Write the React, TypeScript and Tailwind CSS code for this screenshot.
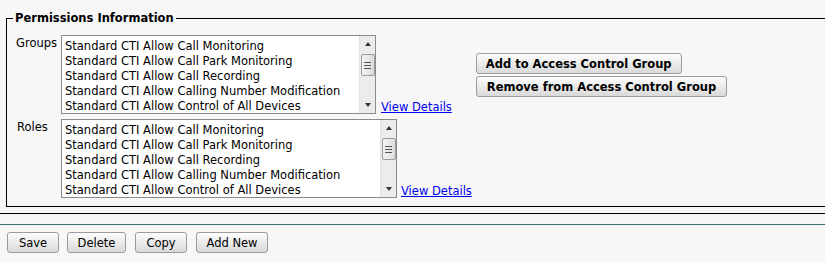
import React from "react";

const items = [
  "Standard CTI Allow Call Monitoring",
  "Standard CTI Allow Call Park Monitoring",
  "Standard CTI Allow Call Recording",
  "Standard CTI Allow Calling Number Modification",
  "Standard CTI Allow Control of All Devices",
];

const font = { fontFamily: "'DejaVu Sans', Verdana, sans-serif" };

function ScrollBar() {
  return (
    <div className="flex h-full w-[16px] flex-col items-center bg-[#ececec] border-l border-[#e2e2e2]">
      <div className="flex h-[16px] w-full items-center justify-center">
        <div className="h-0 w-0 border-x-[3.5px] border-b-[4px] border-x-transparent border-b-[#333]" />
      </div>
      <div className="mt-[2px] flex h-[22px] w-[14px] flex-col items-center justify-center gap-[2px] rounded-[2px] border border-[#9a9a9a] bg-gradient-to-r from-[#f4f4f4] to-[#dcdcdc]">
        <div className="h-px w-[7px] bg-[#555]" />
        <div className="h-px w-[7px] bg-[#555]" />
        <div className="h-px w-[7px] bg-[#555]" />
      </div>
      <div className="flex-1" />
      <div className="flex h-[16px] w-full items-center justify-center">
        <div className="h-0 w-0 border-x-[3.5px] border-t-[4px] border-x-transparent border-t-[#333]" />
      </div>
    </div>
  );
}

function ListBox({ width }: { width: string }) {
  return (
    <div className={`flex h-[79px] ${width} border border-[#8b8b8b] bg-white`}>
      <div className="flex-1 overflow-hidden whitespace-nowrap pl-[3px] pt-[3px] text-[11.5px] leading-[15px] text-black">
        {items.map((t) => (
          <div key={t}>{t}</div>
        ))}
      </div>
      <ScrollBar />
    </div>
  );
}

function Btn({ children, bold, cls }: { children: React.ReactNode; bold?: boolean; cls: string }) {
  return (
    <button
      className={`h-[21px] rounded-[3px] border border-[#9c9c9c] bg-gradient-to-b from-[#fdfdfd] to-[#d9d9d9] ${cls} text-[11.5px] leading-[18px] text-black whitespace-nowrap ${bold ? "font-bold" : ""}`}
      style={font}
    >
      {children}
    </button>
  );
}

export default function App() {
  return (
    <div className="h-[262px] w-[825px] overflow-hidden bg-[#f7f7f7]" style={font}>
      <fieldset className="ml-[6px] mt-[11px] w-[830px] border border-black pb-[8px] pl-[9px]">
        <legend className="-ml-[3px] px-[2px] text-[11.5px] font-bold leading-[14px] text-black">
          Permissions Information
        </legend>
        <div className="mt-[10px] flex">
          <div className="w-[45px] pt-[1px] text-[11.5px] leading-[14px]">Groups</div>
          <ListBox width="w-[315px]" />
          <a className="ml-[5px] self-end text-[11.5px] leading-[14px] text-[#0000ee] underline" href="#">
            View Details
          </a>
          <div className="ml-[24px] mt-[18px] flex flex-col items-start gap-[2px]">
            <Btn bold cls="px-[9px]">Add to Access Control Group</Btn>
            <Btn bold cls="px-[10px]">Remove from Access Control Group</Btn>
          </div>
        </div>
        <div className="mt-[5px] flex">
          <div className="w-[45px] pl-[1px] pt-[1px] text-[11.5px] leading-[14px]">Roles</div>
          <ListBox width="w-[336px]" />
          <a className="ml-[4px] self-end text-[11.5px] leading-[14px] text-[#0000ee] underline" href="#">
            View Details
          </a>
        </div>
      </fieldset>
      <div className="mt-[6px] h-px w-full bg-black" />
      <div className="mt-[10px] h-px w-full bg-[#3f6f6f]" />
      <div className="ml-[7px] mt-[7px] flex">
        <Btn cls="w-[52px]">Save</Btn>
        <Btn cls="ml-[8px] w-[59px]">Delete</Btn>
        <Btn cls="ml-[9px] w-[52px]">Copy</Btn>
        <Btn cls="ml-[9px] w-[72px]">Add New</Btn>
      </div>
    </div>
  );
}
